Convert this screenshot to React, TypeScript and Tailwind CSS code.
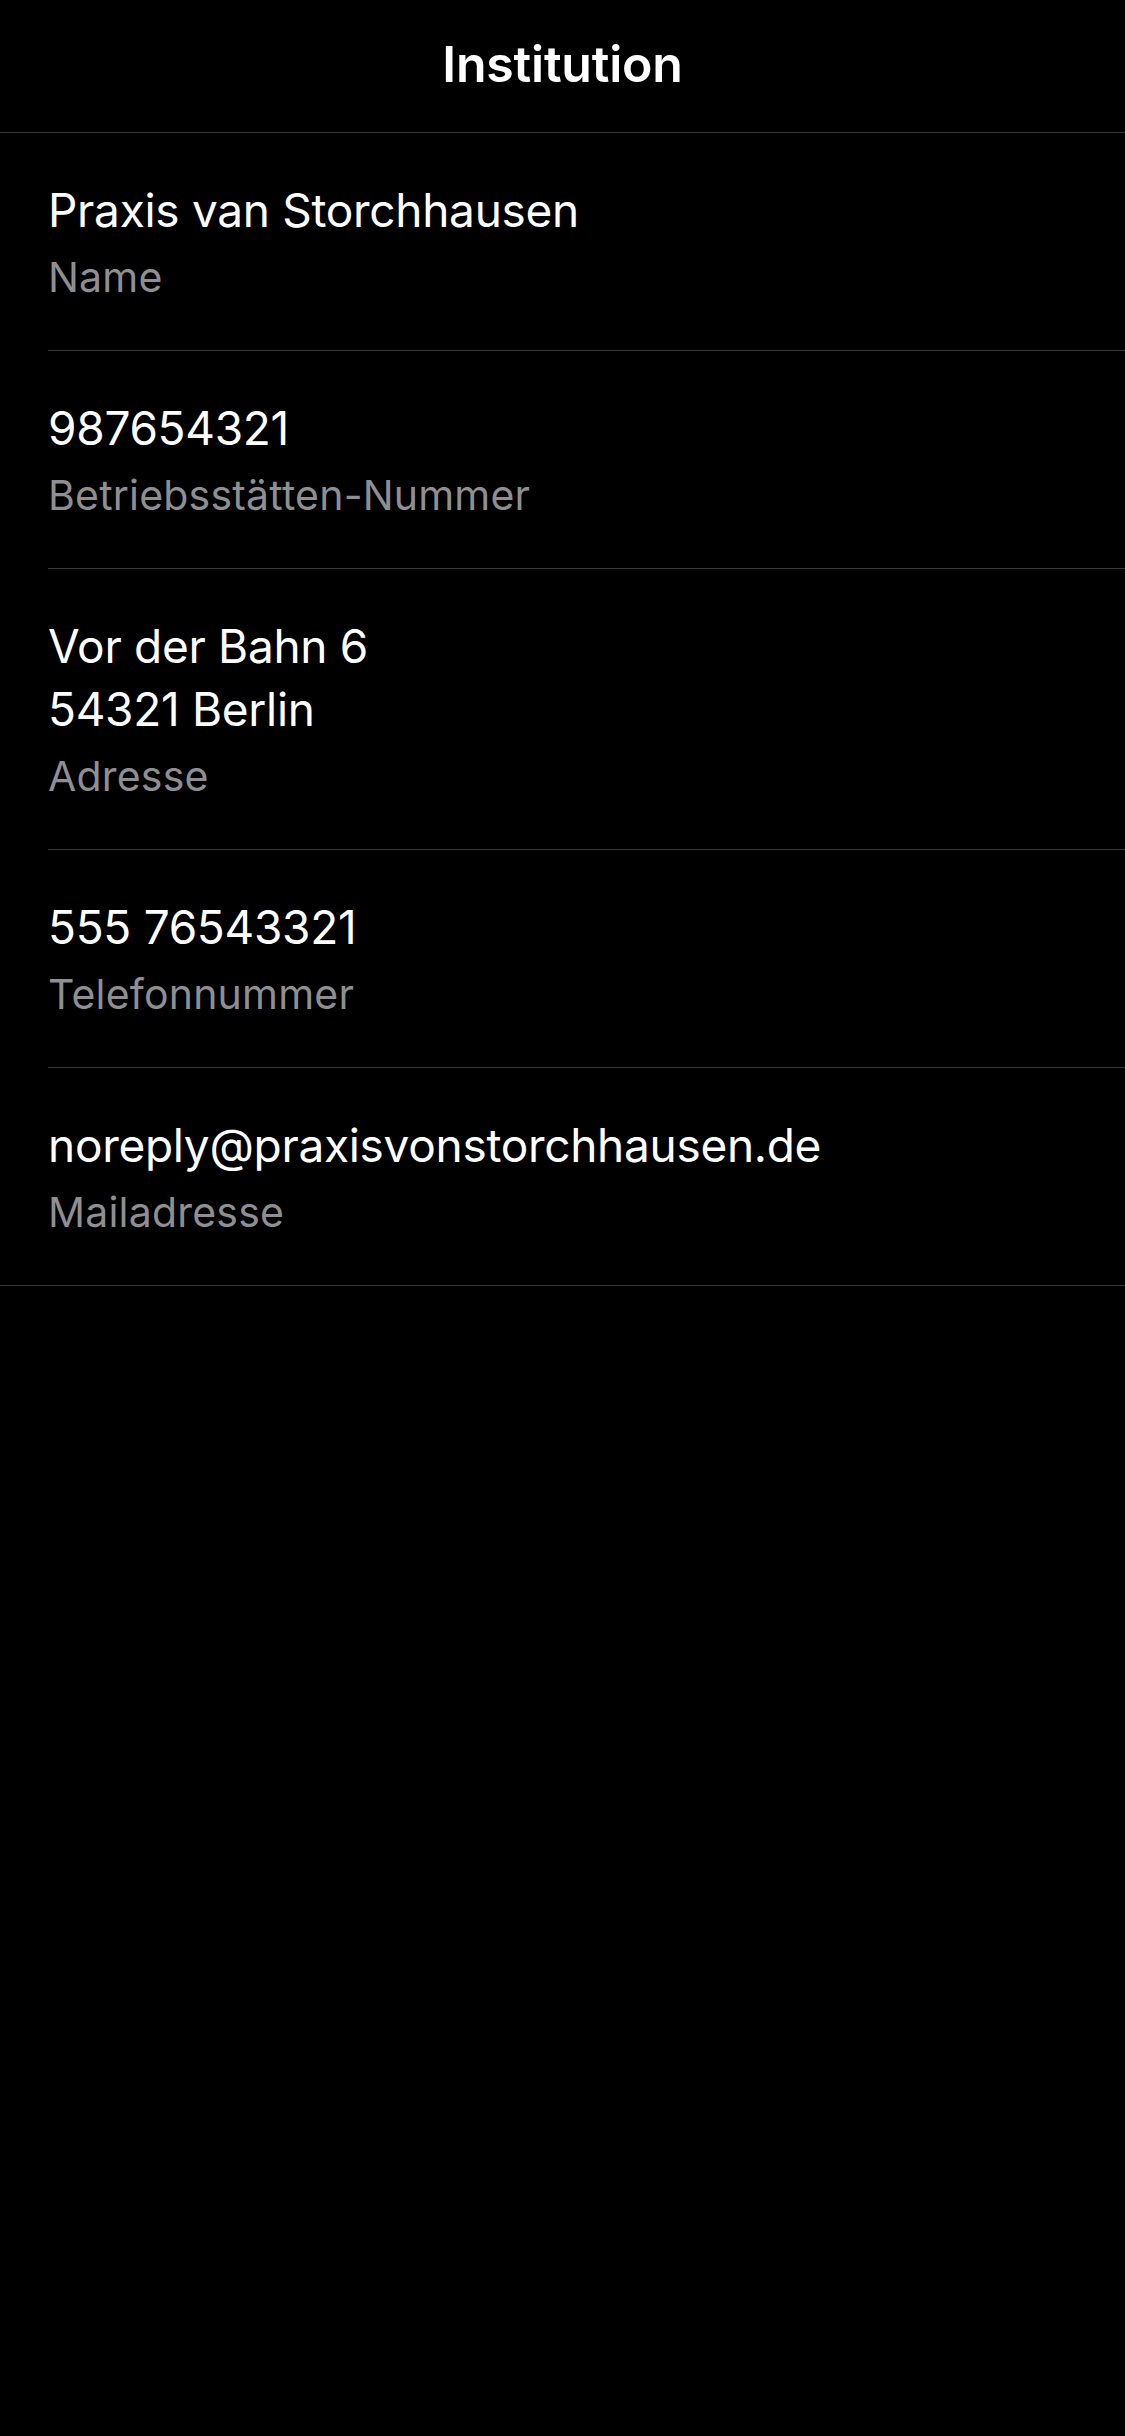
import React from "react";

interface Field {
  value: string[];
  label: string;
}

const fields: Field[] = [
  { value: ["Praxis van Storchhausen"], label: "Name" },
  { value: ["987654321"], label: "Betriebsstätten-Nummer" },
  { value: ["Vor der Bahn 6", "54321 Berlin"], label: "Adresse" },
  { value: ["555 76543321"], label: "Telefonnummer" },
  { value: ["noreply@praxisvonstorchhausen.de"], label: "Mailadresse" },
];

const App: React.FC = () => {
  return (
    <div
      className="min-h-[2436px] w-[1125px] bg-black text-white"
      style={{ fontFamily: "Inter, 'Noto Sans', sans-serif" }}
    >
      {/* Navigation bar */}
      <div className="flex h-[133px] items-start justify-center border-b border-[#38383a]">
        <h1 className="mt-[33px] text-[50px] font-semibold leading-[63px] tracking-[-0.2px]">
          Institution
        </h1>
      </div>

      {/* Field list */}
      <div className="border-b border-[#38383a]">
        {fields.map((field, index) => (
          <div key={field.label} className="pl-[48px]">
            <div
              className={
                index === fields.length - 1
                  ? "pt-[46px] pb-[45px]"
                  : "border-b border-[#38383a] pt-[46px] pb-[45px]"
              }
            >
              {field.value.map((line) => (
                <p key={line} className="text-[46px] leading-[63px] tracking-[-0.3px]">
                  {line}
                </p>
              ))}
              <p className="mt-[7px] text-[41px] leading-[56px] tracking-[0.2px] text-[#8e8e93]">
                {field.label}
              </p>
            </div>
          </div>
        ))}
      </div>
    </div>
  );
};

export default App;
